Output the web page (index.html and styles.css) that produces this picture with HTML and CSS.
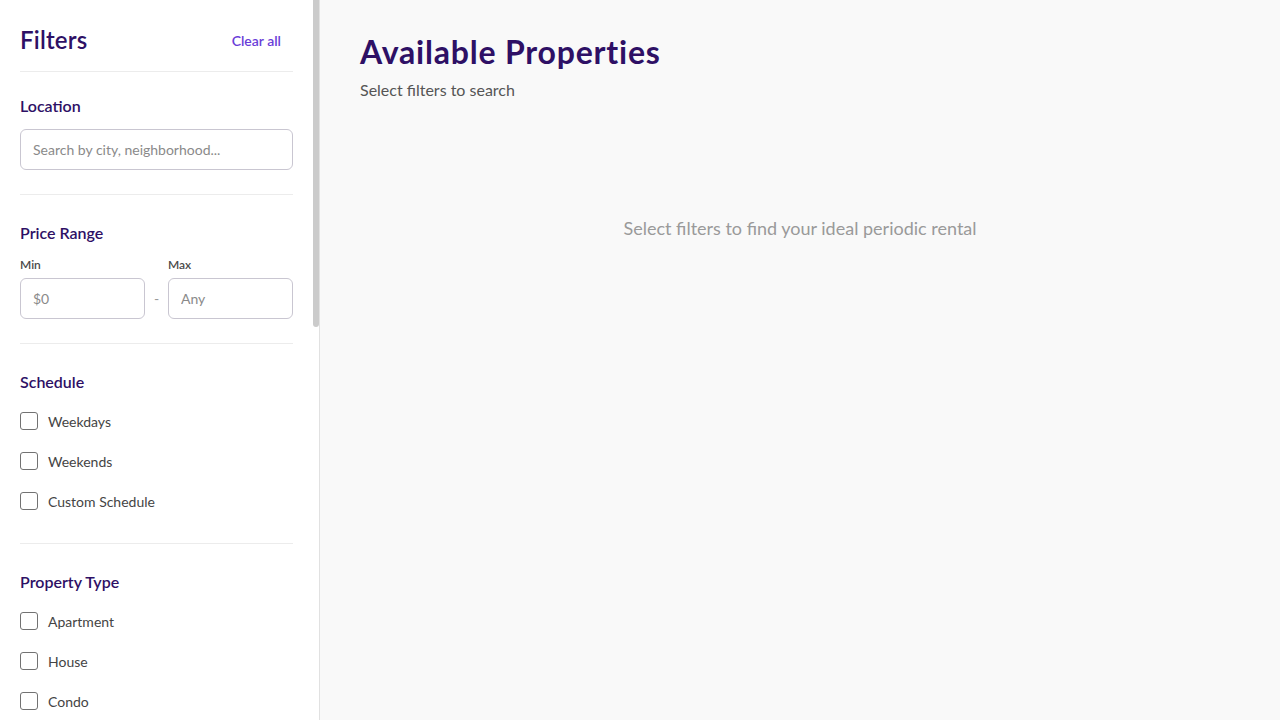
FILE: index.html
```html
<!DOCTYPE html>
<html lang="en">
<head>
<meta charset="utf-8">
<title>Available Properties</title>
<link rel="stylesheet" href="styles.css">
</head>
<body>
<div class="app">
  <div class="sidebar-wrap">
    <aside class="sidebar">
      <div class="sidebar-header">
        <h2 class="sidebar-title">Filters</h2>
        <button class="clear-btn" type="button">Clear all</button>
      </div>

      <section class="filter-section section-location">
        <h3 class="section-title">Location</h3>
        <input class="text-input" type="text" placeholder="Search by city, neighborhood...">
      </section>

      <section class="filter-section">
        <h3 class="section-title">Price Range</h3>
        <div class="price-row">
          <div class="price-field">
            <label class="field-label">Min</label>
            <input class="text-input" type="text" placeholder="$0">
          </div>
          <span class="dash">-</span>
          <div class="price-field">
            <label class="field-label">Max</label>
            <input class="text-input" type="text" placeholder="Any">
          </div>
        </div>
      </section>

      <section class="filter-section checks-section">
        <h3 class="section-title">Schedule</h3>
        <div class="check-list">
          <label class="check-row"><input type="checkbox" class="check"><span>Weekdays</span></label>
          <label class="check-row"><input type="checkbox" class="check"><span>Weekends</span></label>
          <label class="check-row"><input type="checkbox" class="check"><span>Custom Schedule</span></label>
        </div>
      </section>

      <section class="filter-section checks-section">
        <h3 class="section-title">Property Type</h3>
        <div class="check-list">
          <label class="check-row"><input type="checkbox" class="check"><span>Apartment</span></label>
          <label class="check-row"><input type="checkbox" class="check"><span>House</span></label>
          <label class="check-row"><input type="checkbox" class="check"><span>Condo</span></label>
          <label class="check-row"><input type="checkbox" class="check"><span>Townhouse</span></label>
          <label class="check-row"><input type="checkbox" class="check"><span>Studio</span></label>
        </div>
      </section>

      <section class="filter-section">
        <h3 class="section-title">Bedrooms</h3>
        <div class="pill-row">
          <button class="pill" type="button">Any</button>
          <button class="pill" type="button">1</button>
          <button class="pill" type="button">2</button>
          <button class="pill" type="button">3</button>
          <button class="pill" type="button">4+</button>
        </div>
      </section>

      <section class="filter-section checks-section">
        <h3 class="section-title">Amenities</h3>
        <div class="check-list">
          <label class="check-row"><input type="checkbox" class="check"><span>WiFi</span></label>
          <label class="check-row"><input type="checkbox" class="check"><span>Parking</span></label>
          <label class="check-row"><input type="checkbox" class="check"><span>Laundry</span></label>
          <label class="check-row"><input type="checkbox" class="check"><span>Air Conditioning</span></label>
          <label class="check-row"><input type="checkbox" class="check"><span>Pet Friendly</span></label>
          <label class="check-row"><input type="checkbox" class="check"><span>Furnished</span></label>
        </div>
      </section>

      <section class="filter-section">
        <h3 class="section-title">Minimum Stay</h3>
        <input class="text-input" type="text" placeholder="Any length">
      </section>

      <div class="apply-wrap">
        <button class="apply-btn" type="button">Apply Filters</button>
      </div>
    </aside>
    <div class="scroll-thumb"></div>
  </div>

  <main class="main">
    <h1 class="page-title">Available Properties</h1>
    <p class="page-subtitle">Select filters to search</p>
    <div class="empty-state">
      <p class="empty-text">Select filters to find your ideal periodic rental</p>
    </div>
  </main>
</div>
</body>
</html>
```

FILE: styles.css
```css
html, body {
  margin: 0;
  height: 100%;
}

body {
  font-family: "Lato", "Open Sans", "Noto Sans", sans-serif;
  color: #333;
  background: #f9f9f9;
}

.app {
  display: flex;
  height: 100vh;
}

.sidebar-wrap {
  position: relative;
  width: 320px;
  flex-shrink: 0;
  box-sizing: border-box;
  background: #ffffff;
  border-right: 1px solid #e1e1e1;
}

.sidebar {
  height: 100%;
  box-sizing: border-box;
  overflow-y: auto;
  padding: 0 26px 0 20px;
  scrollbar-width: none;
}

.sidebar::-webkit-scrollbar {
  display: none;
}

.scroll-thumb {
  position: absolute;
  top: 0;
  right: 0;
  width: 6px;
  height: 327px;
  background: #cbcbcb;
  border-radius: 0 0 3px 3px;
}

.sidebar-header {
  display: flex;
  justify-content: space-between;
  align-items: center;
  padding: 22px 0 13px;
  border-bottom: 1px solid #ececec;
}

.sidebar-title {
  margin: 0;
  font-size: 24px;
  line-height: 36px;
  font-weight: 600;
  color: #2e1065;
  letter-spacing: 0.2px;
}

.clear-btn {
  border: none;
  background: none;
  font-family: inherit;
  font-size: 14px;
  line-height: 20px;
  font-weight: 600;
  color: #6a3dd8;
  padding: 8px 12px 6px;
  cursor: pointer;
}

.filter-section {
  padding: 26px 0 24px;
  border-bottom: 1px solid #ececec;
}

.section-location {
  padding-top: 22px;
}

.checks-section {
  padding-bottom: 30px;
}

.section-title {
  margin: 0 0 11px;
  font-size: 16px;
  line-height: 24px;
  font-weight: 600;
  color: #2e1065;
}

.checks-section .section-title {
  margin-bottom: 15px;
}

.text-input {
  display: block;
  width: 100%;
  height: 41px;
  box-sizing: border-box;
  border: 1px solid #c9c6d1;
  border-radius: 6px;
  padding: 0 12px;
  font-family: inherit;
  font-size: 14px;
  color: #333;
  background: #fff;
  outline: none;
}

.text-input::placeholder {
  color: #8a8a8a;
}

.price-row {
  display: flex;
  align-items: flex-end;
  gap: 8px;
}

.price-field {
  flex: 1;
  min-width: 0;
}

.field-label {
  display: block;
  font-size: 12px;
  line-height: 18px;
  font-weight: 600;
  color: #4a4a4a;
  margin-bottom: 4px;
}

.dash {
  width: 7px;
  text-align: center;
  line-height: 41px;
  font-size: 14px;
  color: #999;
}

.check-list {
  display: flex;
  flex-direction: column;
  gap: 16px;
}

.check-row {
  display: flex;
  align-items: center;
  gap: 10px;
  height: 24px;
  font-size: 14px;
  color: #444;
  cursor: pointer;
}

.check {
  appearance: none;
  -webkit-appearance: none;
  width: 18px;
  height: 18px;
  margin: 0;
  border: 1px solid #727272;
  border-radius: 3px;
  background: #fff;
  flex-shrink: 0;
}

.pill-row {
  display: flex;
  gap: 8px;
}

.pill {
  flex: 1;
  height: 40px;
  border: 1px solid #c9c6d1;
  border-radius: 6px;
  background: #fff;
  font-family: inherit;
  font-size: 14px;
  color: #444;
}

.apply-wrap {
  padding: 24px 0;
}

.apply-btn {
  width: 100%;
  height: 44px;
  border: none;
  border-radius: 6px;
  background: #6a3dd8;
  color: #fff;
  font-family: inherit;
  font-size: 15px;
  font-weight: 600;
}

.main {
  flex: 1;
  min-width: 0;
  padding: 33px 40px;
  background: #f9f9f9;
}

.page-title {
  margin: 0;
  font-size: 32px;
  line-height: 38px;
  font-weight: 700;
  color: #2e1065;
  letter-spacing: 0.8px;
}

.page-subtitle {
  margin: 7px 0 0;
  font-size: 16px;
  line-height: 24px;
  color: #555;
}

.empty-state {
  margin-top: 113px;
  text-align: center;
}

.empty-text {
  margin: 0;
  font-size: 18px;
  line-height: 27px;
  color: #9a9a9a;
}
```
